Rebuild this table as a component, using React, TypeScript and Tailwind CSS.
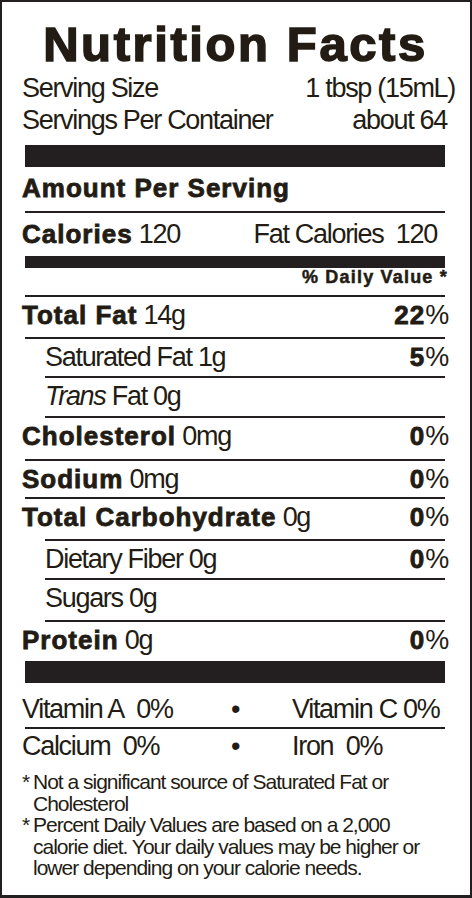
import type { ReactNode } from 'react';

type Row = {
  label: ReactNode;
  amount: string;
  dv?: string;
  sub?: boolean;
  subRule?: boolean;
  h: string;
};

const rows: Row[] = [
  { label: 'Total Fat', amount: '14g', dv: '22', h: 'h-[40px]' },
  { label: 'Saturated Fat', amount: '1g', dv: '5', sub: true, h: 'h-[37px]' },
  {
    label: (
      <>
        <i>Trans</i> Fat
      </>
    ),
    amount: '0g',
    sub: true,
    subRule: true,
    h: 'h-[38px]',
  },
  { label: 'Cholesterol', amount: '0mg', dv: '0', subRule: true, h: 'h-[41px]' },
  { label: 'Sodium', amount: '0mg', dv: '0', h: 'h-[36px]' },
  { label: 'Total Carbohydrate', amount: '0g', dv: '0', h: 'h-[40px]' },
  { label: 'Dietary Fiber', amount: '0g', dv: '0', sub: true, subRule: true, h: 'h-[37px]' },
  { label: 'Sugars', amount: '0g', sub: true, subRule: true, h: 'h-[40px]' },
  { label: 'Protein', amount: '0g', dv: '0', subRule: true, h: 'h-[39px]' },
];

const heavy = 'font-bold text-[26px] tracking-[1px] [-webkit-text-stroke:0.8px_currentColor]';

function Rule({ indent }: { indent?: boolean }) {
  return (
    <div className={`h-[2px] bg-[#231f20] mr-[10px] ${indent ? 'ml-[23px]' : 'ml-[3px]'}`} />
  );
}

function Bar({ thin }: { thin?: boolean }) {
  return <div className={`bg-[#231f20] ml-[3px] mr-[10px] ${thin ? 'h-[12px]' : 'h-[22px]'}`} />;
}

export default function App() {
  return (
    <div className="w-[472px] h-[898px] bg-white border-2 border-b-[3px] border-[#231f20] pl-[20px] pr-[15px] pt-[18px] text-[#231c14] font-['Liberation_Sans',Arial,sans-serif] text-[27px] tracking-[-1.3px]">
      <h1 className="text-center pr-[6px] text-[49px] leading-none font-bold tracking-[2.6px] [-webkit-text-stroke:1.6px_currentColor]">
        Nutrition Facts
      </h1>

      <div className="mt-[3px] leading-[32px]">
        <div className="flex justify-between">
          <span>Serving Size</span>
          <span>1 tbsp (15mL)</span>
        </div>
        <div className="flex justify-between">
          <span>Servings Per Container</span>
          <span className="mr-[8px]">about 64</span>
        </div>
      </div>

      <div className="mt-[9px]">
        <Bar />
      </div>
      <div className={`h-[44px] leading-[43px] ${heavy}`}>Amount Per Serving</div>
      <Rule />
      <div className="h-[43px] leading-[42px] flex justify-between pr-[18px]">
        <span>
          <b className={heavy}>Calories</b> 120
        </span>
        <span>Fat Calories&nbsp; 120</span>
      </div>
      <Bar thin />
      <div className="h-[27px] leading-[18px] text-right pr-[7px] font-bold text-[18px] tracking-[1.2px] [-webkit-text-stroke:0.5px_currentColor]">
        % Daily Value *
      </div>

      {rows.map((r, i) => (
        <div key={i}>
          <Rule indent={r.subRule} />
          <div className={`flex justify-between pr-[7px] leading-[36px] ${r.h} ${r.sub ? 'pl-[23px]' : ''}`}>
            <span>
              {r.sub ? r.label : <b className={heavy}>{r.label}</b>} {r.amount}
            </span>
            {r.dv && (
              <span>
                <b className={heavy}>{r.dv}</b>%
              </span>
            )}
          </div>
        </div>
      ))}

      <Bar />
      <div className="h-[44px] pt-[8px] leading-[36px] flex">
        <span className="w-[190px]">Vitamin A&nbsp; 0%</span>
        <span className="w-[46px] text-center">•</span>
        <span className="pl-[34px]">Vitamin C 0%</span>
      </div>
      <Rule />
      <div className="h-[36px] leading-[34px] flex">
        <span className="w-[190px]">Calcium&nbsp; 0%</span>
        <span className="w-[46px] text-center">•</span>
        <span className="pl-[34px]">Iron&nbsp; 0%</span>
      </div>

      <div className="mt-[6px] text-[21px] tracking-[-1px] leading-[21.5px]">
        <div className="flex">
          <span className="w-[11px]">*</span>
          <span>
            Not a significant source of Saturated Fat or
            <br />
            Cholesterol
          </span>
        </div>
        <div className="flex">
          <span className="w-[11px]">*</span>
          <span>
            Percent Daily Values are based on a 2,000
            <br />
            calorie diet. Your daily values may be higher or
            <br />
            lower depending on your calorie needs.
          </span>
        </div>
      </div>
    </div>
  );
}
